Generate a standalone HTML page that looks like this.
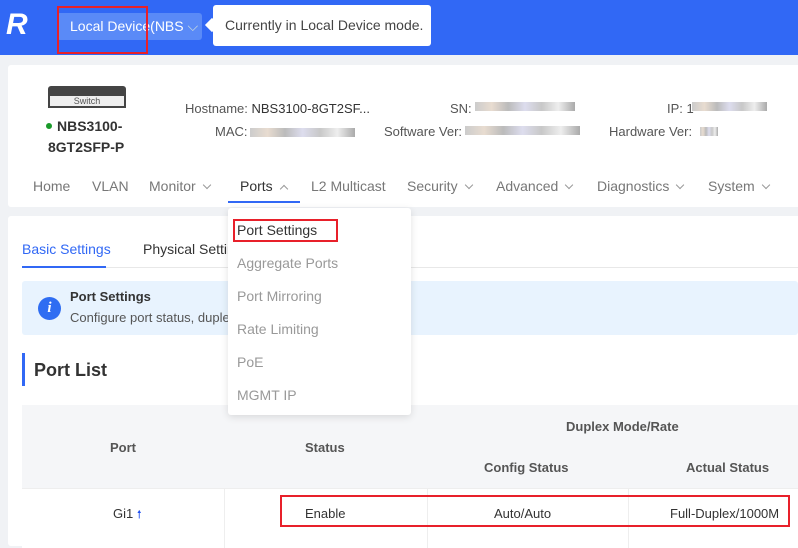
<!DOCTYPE html>
<html><head><meta charset="utf-8"><style>
*{margin:0;padding:0;box-sizing:border-box}
body{width:798px;height:538px;overflow:hidden;background:#f0f2f5;font-family:"Liberation Sans",sans-serif;position:relative;font-size:13px;color:#333}
.a{position:absolute;white-space:nowrap}
.hdr{left:0;top:0;width:798px;height:55px;background:#3168f5}
.card{background:#fff;border-radius:3px}
.nav{top:178px;font-size:14px;color:#777}
.chev{display:inline-block;width:6px;height:6px;border-right:1px solid #999;border-bottom:1px solid #999;transform:rotate(45deg);margin-left:8px;position:relative;top:-3px}
.blur{background:linear-gradient(90deg,#ccc,#e8dcd0,#bbb,#dde,#c8c8c8,#eee,#aaa);height:9px}
.dd{color:#999;font-size:14px}
.red{border:2px solid #e8202a}
</style></head><body>
<div class="a hdr"></div>
<div class="a" style="left:6px;top:8px;font:italic bold 30px 'Liberation Sans';color:#fff;letter-spacing:-2px">R</div>
<div class="a" style="left:57px;top:13px;width:145px;height:27px;background:#5a8af7;border-radius:3px"></div>
<div class="a" style="left:70px;top:18px;color:#fff;font-size:14px">Local Device(NBS <span style="color:#cdd">⌵</span></div>
<div class="a red" style="left:57px;top:6px;width:91px;height:48px"></div>
<div class="a" style="left:213px;top:5px;width:218px;height:41px;background:#fff;border-radius:3px"></div>
<div class="a" style="left:207px;top:20px;width:10px;height:10px;background:#fff;transform:rotate(45deg)"></div>
<div class="a" style="left:225px;top:17px;font-size:14px;color:#444">Currently in Local Device mode.</div>

<div class="a card" style="left:8px;top:65px;width:798px;height:142px"></div>
<div class="a" style="left:48px;top:86px;width:78px;height:20px;background:#444;border-radius:3px 3px 0 0"></div>
<div class="a" style="left:48px;top:94px;width:78px;height:14px;background:#eee;border:2px solid #444;font-size:9px;text-align:center;line-height:10px;color:#555">Switch</div>
<div class="a" style="left:46px;top:123px;width:6px;height:6px;border-radius:3px;background:#1a9a2a"></div>
<div class="a" style="left:57px;top:118px;font-weight:bold;font-size:14px">NBS3100-</div>
<div class="a" style="left:48px;top:139px;font-weight:bold;font-size:14px">8GT2SFP-P</div>
<div class="a" style="left:185px;top:101px;color:#555">Hostname: <span style="color:#333">NBS3100-8GT2SF...</span></div>
<div class="a" style="left:215px;top:124px;color:#555">MAC:</div><div class="a blur" style="left:250px;top:128px;width:105px"></div>
<div class="a" style="left:450px;top:101px;color:#555">SN:</div><div class="a blur" style="left:475px;top:102px;width:100px"></div>
<div class="a" style="left:384px;top:124px;color:#555">Software Ver:</div><div class="a blur" style="left:465px;top:126px;width:115px"></div>
<div class="a" style="left:667px;top:101px;color:#555">IP: 1</div><div class="a blur" style="left:692px;top:102px;width:75px"></div>
<div class="a" style="left:609px;top:124px;color:#555">Hardware Ver:</div><div class="a blur" style="left:700px;top:127px;width:18px"></div>

<div class="a nav" style="left:33px">Home</div>
<div class="a nav" style="left:92px">VLAN</div>
<div class="a nav" style="left:149px">Monitor<span class="chev"></span></div>
<div class="a nav" style="left:240px;color:#333">Ports<span class="chev" style="transform:rotate(225deg);top:1px"></span></div>
<div class="a" style="left:228px;top:201px;width:72px;height:2px;background:#3168f5"></div>
<div class="a nav" style="left:311px">L2 Multicast</div>
<div class="a nav" style="left:407px">Security<span class="chev"></span></div>
<div class="a nav" style="left:496px">Advanced<span class="chev"></span></div>
<div class="a nav" style="left:597px">Diagnostics<span class="chev"></span></div>
<div class="a nav" style="left:708px">System<span class="chev"></span></div>

<div class="a card" style="left:8px;top:216px;width:798px;height:330px"></div>
<div class="a" style="left:22px;top:241px;color:#3168f5;font-size:14px">Basic Settings</div>
<div class="a" style="left:22px;top:266px;width:84px;height:2px;background:#3168f5"></div>
<div class="a" style="left:106px;top:267px;width:700px;height:1px;background:#e8e8e8"></div>
<div class="a" style="left:143px;top:241px;font-size:14px">Physical Settings</div>
<div class="a" style="left:22px;top:281px;width:776px;height:54px;background:#e8f3fe;border-radius:3px"></div>
<div class="a" style="left:38px;top:297px;width:23px;height:23px;border-radius:50%;background:#2f6df2;color:#fff;font:italic bold 15px 'Liberation Serif';text-align:center;line-height:23px">i</div>
<div class="a" style="left:70px;top:289px;font-weight:bold">Port Settings</div>
<div class="a" style="left:70px;top:310px;color:#555">Configure port status, duplex mode and rate</div>
<div class="a" style="left:22px;top:353px;width:3px;height:33px;background:#3168f5"></div>
<div class="a" style="left:34px;top:360px;font-weight:bold;font-size:18px;color:#333">Port List</div>

<div class="a" style="left:22px;top:405px;width:776px;height:83px;background:#f5f6f8"></div>
<div class="a" style="left:22px;top:488px;width:776px;height:60px;background:#fff"></div>
<div class="a" style="left:22px;top:488px;width:776px;height:1px;background:#eee"></div>
<div class="a" style="left:224px;top:488px;width:1px;height:60px;background:#eee"></div>
<div class="a" style="left:427px;top:488px;width:1px;height:60px;background:#eee"></div>
<div class="a" style="left:628px;top:488px;width:1px;height:60px;background:#eee"></div>
<div class="a" style="left:110px;top:440px;font-weight:bold;color:#555">Port</div>
<div class="a" style="left:305px;top:440px;font-weight:bold;color:#555">Status</div>
<div class="a" style="left:566px;top:419px;font-weight:bold;color:#555">Duplex Mode/Rate</div>
<div class="a" style="left:484px;top:460px;font-weight:bold;color:#555">Config Status</div>
<div class="a" style="left:686px;top:460px;font-weight:bold;color:#555">Actual Status</div>
<div class="a" style="left:113px;top:506px">Gi1 <span style="color:#2050f0;font-size:11px">🠕</span></div>
<div class="a" style="left:305px;top:506px">Enable</div>
<div class="a" style="left:494px;top:506px">Auto/Auto</div>
<div class="a" style="left:670px;top:506px">Full-Duplex/1000M</div>
<div class="a red" style="left:280px;top:495px;width:510px;height:32px"></div>

<div class="a" style="left:228px;top:208px;width:183px;height:207px;background:#fff;box-shadow:0 2px 8px rgba(0,0,0,.12);border-radius:3px"></div>
<div class="a" style="left:237px;top:222px;font-size:14px;color:#333">Port Settings</div>
<div class="a red" style="left:233px;top:219px;width:105px;height:23px"></div>
<div class="a dd" style="left:237px;top:255px">Aggregate Ports</div>
<div class="a dd" style="left:237px;top:288px">Port Mirroring</div>
<div class="a dd" style="left:237px;top:321px">Rate Limiting</div>
<div class="a dd" style="left:237px;top:354px">PoE</div>
<div class="a dd" style="left:237px;top:387px">MGMT IP</div>
</body></html>
